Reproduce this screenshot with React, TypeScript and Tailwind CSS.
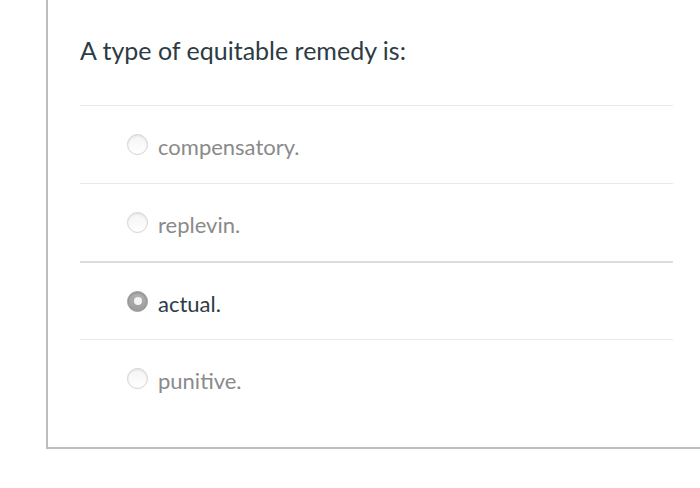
import * as React from 'react';

interface Option {
	id: string;
	label: string;
}

const options: Option[] = [
	{ id: 'a', label: 'compensatory.' },
	{ id: 'b', label: 'replevin.' },
	{ id: 'c', label: 'actual.' },
	{ id: 'd', label: 'punitive.' },
];

function Radio({ checked }: { checked: boolean }) {
	if (checked) {
		return (
			<span className="flex h-[21px] w-[21px] shrink-0 items-center justify-center rounded-full border border-[#9a9a9a] bg-gradient-to-b from-[#b4b4b4] to-[#9c9c9c] shadow-[inset_0_1px_2px_rgba(0,0,0,0.25)]">
				<span className="h-[8px] w-[8px] rounded-full bg-[#f4f4f4]" />
			</span>
		);
	}
	return (
		<span className="h-[21px] w-[21px] shrink-0 rounded-full border border-[#d2d2d2] bg-gradient-to-b from-[#f4f4f4] to-white shadow-[inset_0_1px_2px_rgba(0,0,0,0.08)]" />
	);
}

export default function App() {
	const [selected, setSelected] = React.useState('c');

	return (
		<div className="h-[488px] w-[700px] overflow-hidden bg-white font-['Lato','Liberation_Sans',sans-serif]">
			<div className="ml-[46px] h-[449px] border-b-2 border-l-2 border-[#bdbdbd] pl-[32px] pr-[27px]">
				<div className="h-[105px] pt-[35px]">
					<h1 className="text-[25px] leading-[30px] text-[#2d3b45]">A type of equitable remedy is:</h1>
				</div>
				{options.map((opt, i) => {
					const isSel = selected === opt.id;
					return (
						<div
							key={opt.id}
							onClick={() => setSelected(opt.id)}
							className={`flex h-[78px] cursor-pointer items-center pl-[47px] ${
								i === 2 ? 'border-t-2 border-[#dcdcdc]' : 'border-t border-[#eaeaea]'
							}`}
						>
							<Radio checked={isSel} />
							<span
								className={`ml-[10px] pt-[5px] text-[22px] leading-[26px] ${
									isSel ? 'text-[#2d3b45]' : 'text-[#8a8a8a]'
								}`}
							>
								{opt.label}
							</span>
						</div>
					);
				})}
			</div>
		</div>
	);
}
